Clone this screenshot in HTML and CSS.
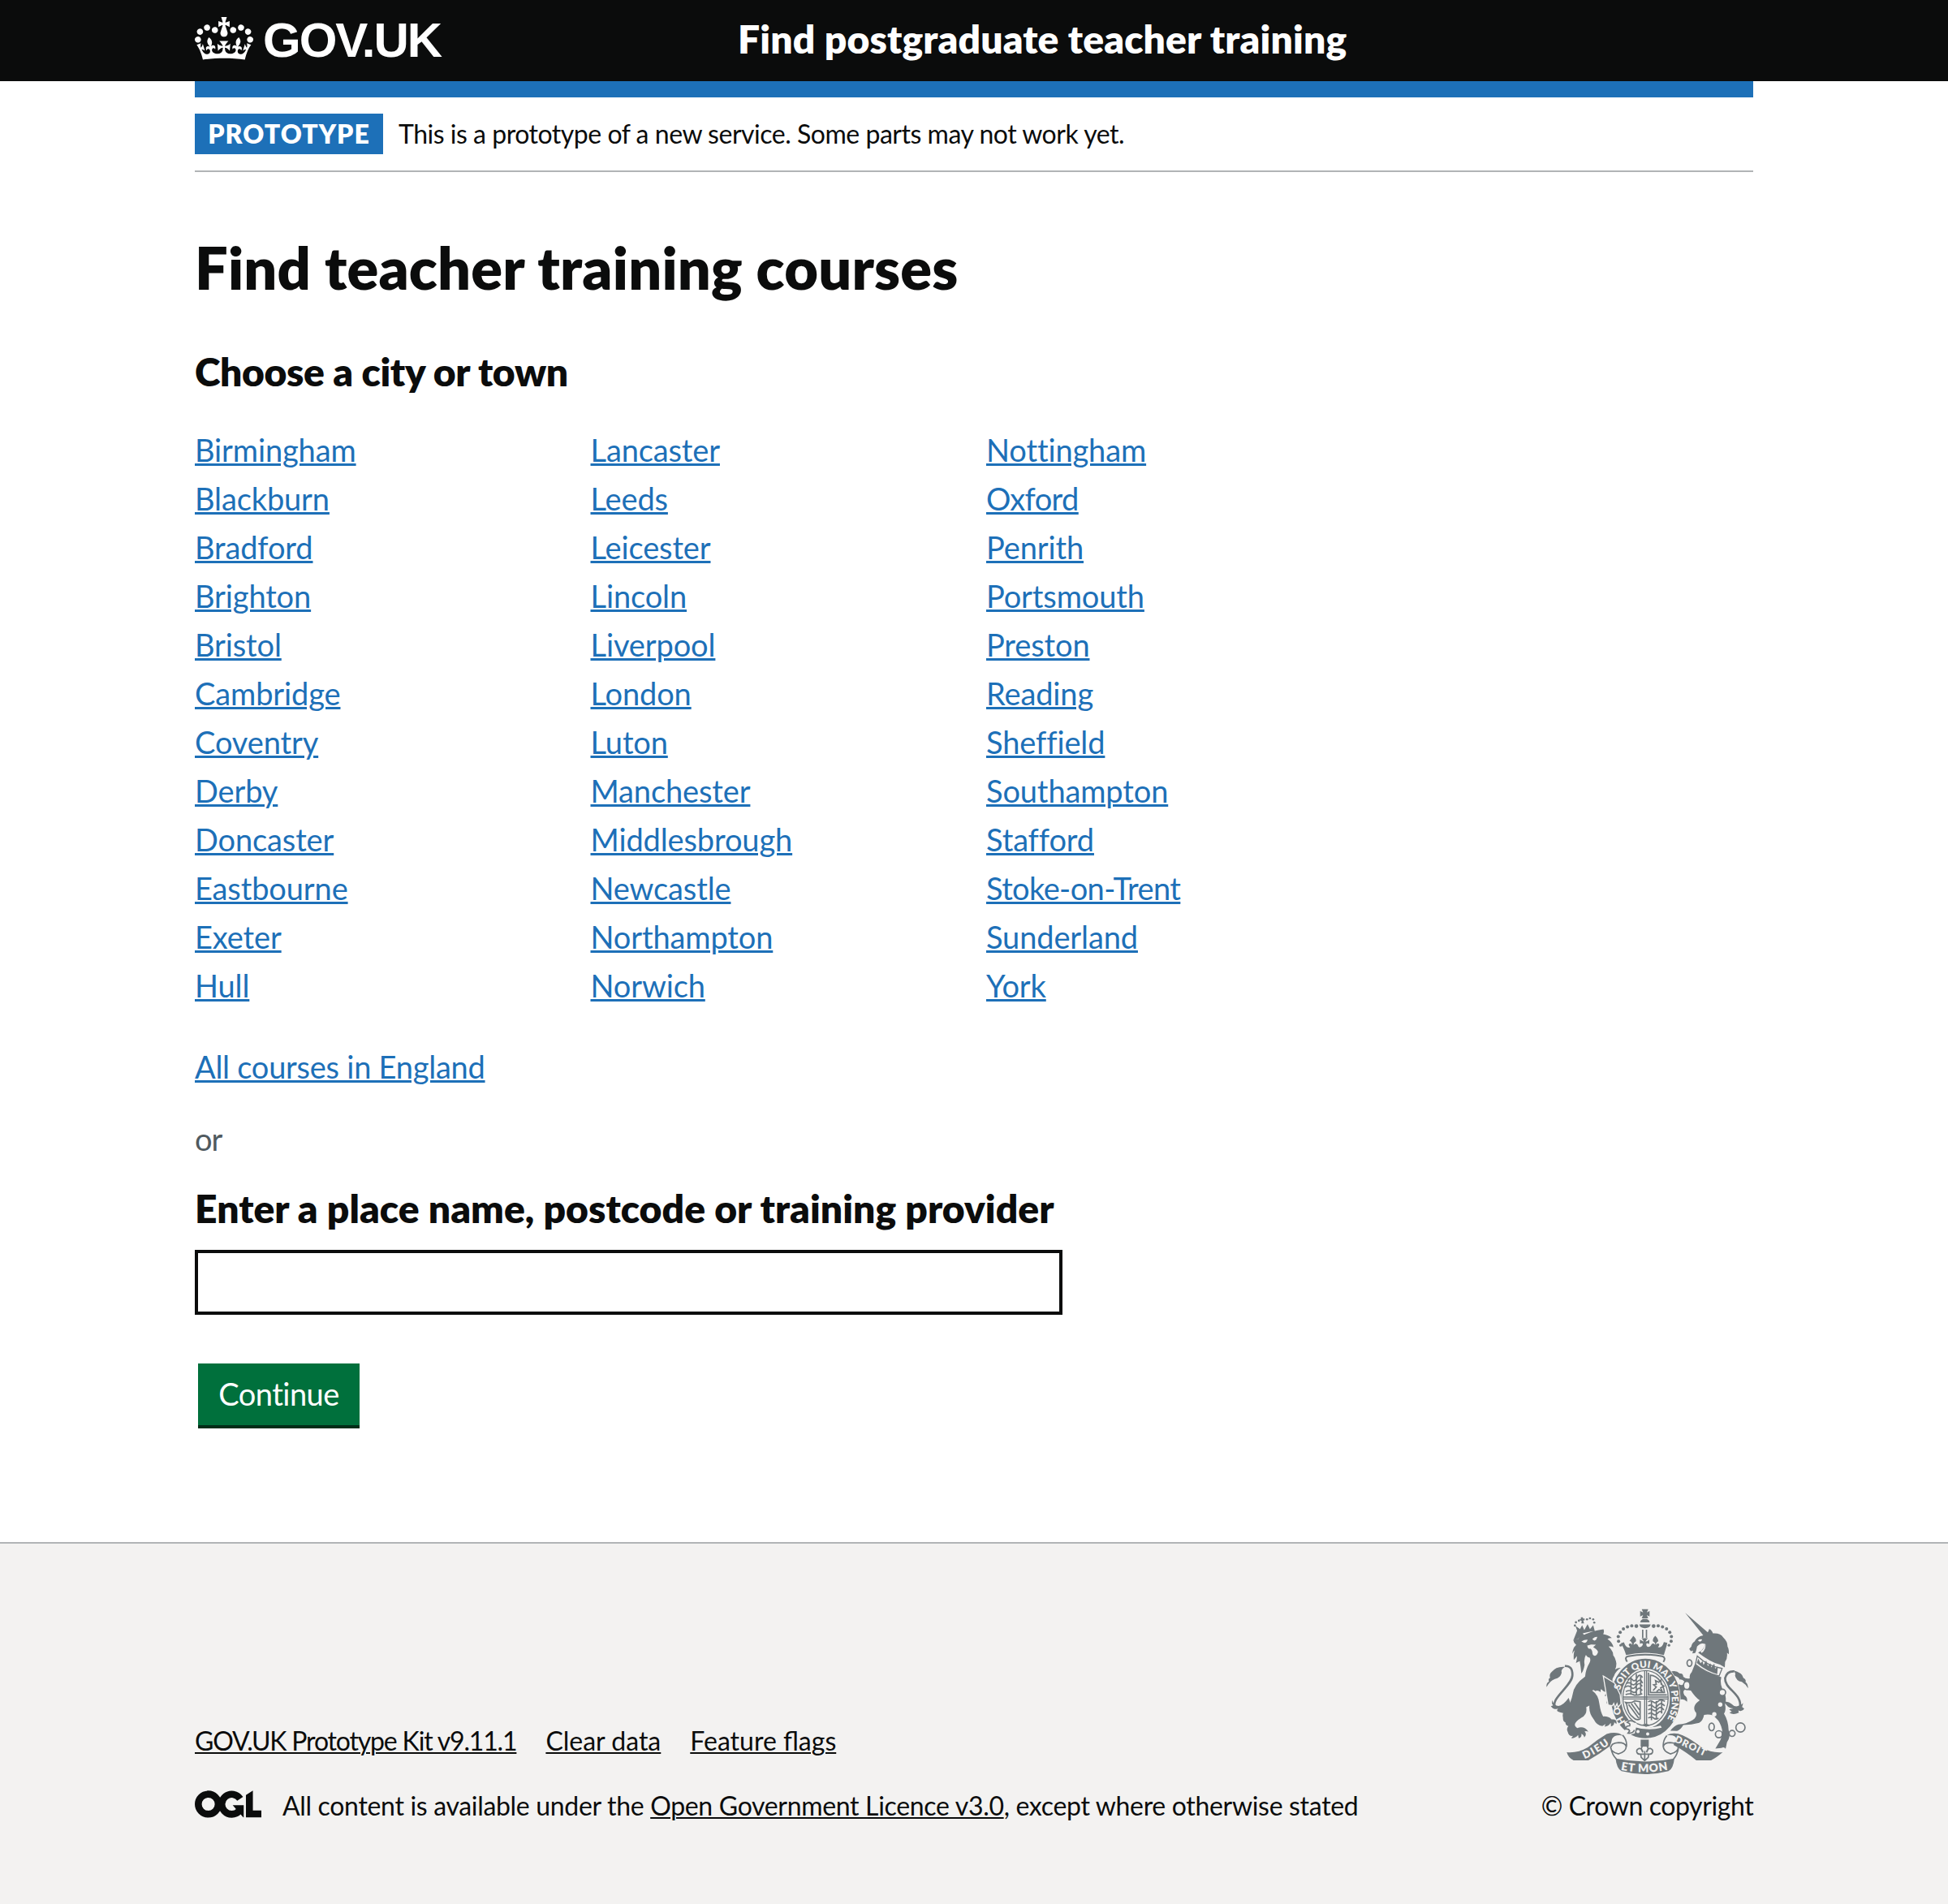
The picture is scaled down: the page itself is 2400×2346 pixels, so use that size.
FILE: index.html
```html
<!DOCTYPE html>
<html lang="en">
<head>
<meta charset="utf-8">
<title>Find teacher training courses</title>
<link rel="stylesheet" href="styles.css">
</head>
<body>
<header class="header">
  <div class="container header-row">
    <div class="header-logo">
      <svg class="crown" viewBox="0 0 132 97" aria-hidden="true"><path fill="currentColor" d="M25 30.2c3.5 1.5 7.7-.2 9.1-3.7 1.5-3.6-.2-7.8-3.9-9.2-3.6-1.4-7.6.3-9.1 3.9-1.4 3.5.3 7.5 3.9 9zM9 39.5c3.6 1.5 7.8-.2 9.2-3.7 1.5-3.6-.2-7.8-3.9-9.1-3.6-1.5-7.6.2-9.1 3.8-1.4 3.5.3 7.5 3.8 9zM4.4 57.2c3.5 1.5 7.7-.2 9.1-3.8 1.5-3.6-.2-7.7-3.9-9.1-3.5-1.5-7.6.3-9.1 3.8-1.4 3.5.3 7.6 3.9 9.1zm38.3-21.4c3.5 1.5 7.7-.2 9.1-3.8 1.5-3.6-.2-7.7-3.9-9.1-3.6-1.5-7.6.3-9.1 3.8-1.3 3.6.4 7.7 3.9 9.1zm64.4-5.6c-3.6 1.5-7.8-.2-9.1-3.7-1.5-3.6.2-7.8 3.8-9.2 3.6-1.4 7.7.3 9.2 3.9 1.3 3.5-.4 7.5-3.9 9zm15.9 9.3c-3.6 1.5-7.7-.2-9.1-3.7-1.5-3.6.2-7.8 3.7-9.1 3.6-1.5 7.7.2 9.2 3.8 1.5 3.5-.3 7.5-3.8 9zm4.7 17.7c-3.6 1.5-7.8-.2-9.2-3.8-1.5-3.6.2-7.7 3.9-9.1 3.6-1.5 7.7.3 9.2 3.8 1.3 3.5-.4 7.6-3.9 9.1zM89.3 35.8c-3.6 1.5-7.8-.2-9.2-3.8-1.4-3.6.2-7.7 3.9-9.1 3.6-1.5 7.7.3 9.2 3.8 1.4 3.6-.3 7.7-3.9 9.1zM69.7 17.7l8.9 4.7V9.3l-8.9 2.8c-.2-.3-.5-.6-.9-.9L72.4 0H59.6l3.5 11.2c-.3.3-.6.5-.9.9l-8.8-2.8v13.1l8.8-4.7c.3.3.6.7.9.9l-5 15.4v.1c-.2.8-.4 1.6-.4 2.4 0 4.1 3.1 7.5 7 8.1h.2c.3 0 .7.1 1 .1.4 0 .7 0 1-.1h.2c4-.6 7.1-4.1 7.1-8.1 0-.8-.1-1.7-.4-2.4V34l-5.1-15.4c.4-.2.7-.6 1-.9zM66 92.8c16.9 0 32.8 1.1 47.1 3.2 4-16.9 8.9-26.7 14-33.5l-9.6-3.4c1 4.9 1.1 7.2 0 10.2-1.5-1.4-3-4.3-4.2-8.7L108.6 76c2.8-2 5-3.2 7.5-3.3-4.4 9.4-10 11.9-13.6 11.2-4.3-.8-6.3-4.6-5.6-7.9 1-4.7 5.7-5.9 8-.5 4.3-8.7-3-11.4-7.6-8.8 7.1-7.2 7.9-13.5 2.1-21.1-8 6.1-8.1 12.3-4.5 20.8-4.7-5.4-12.1-2.5-9.5 6.2 3.4-5.2 7.9-2 7.2 3.1-.6 4.3-6.4 7.8-13.5 7.2-10.3-.9-10.9-8-11.2-13.8 2.5-.5 7.1 1.8 11 7.3L80.2 60c-4.1 4.4-8 5.3-12.3 5.4 1.4-4.4 8-11.6 8-11.6H55.5s6.4 7.2 7.9 11.6c-4.2-.1-8-1-12.3-5.4l1.4 16.4c3.9-5.5 8.5-7.7 10.9-7.3-.3 5.8-.9 12.8-11.1 13.8-7.2.6-12.9-2.9-13.5-7.2-.7-5 3.8-8.3 7.1-3.1 2.7-8.7-4.6-11.6-9.4-6.2 3.7-8.5 3.6-14.7-4.6-20.8-5.8 7.6-5 13.9 2.2 21.1-4.7-2.6-11.9.1-7.7 8.8 2.3-5.5 7.1-4.2 8.1.5.7 3.3-1.3 7.1-5.7 7.9-3.5.7-9-1.8-13.5-11.2 2.5.1 4.7 1.3 7.5 3.3l-4.7-15.4c-1.2 4.4-2.7 7.2-4.3 8.7-1.1-3-.9-5.3 0-10.2l-9.5 3.4c5 6.9 9.9 16.7 14 33.5 14.8-2.1 30.8-3.2 47.7-3.2z"/></svg>
      <span class="logotype">GOV.UK</span>
    </div>
    <div class="service-name">Find postgraduate teacher training</div>
  </div>
</header>

<div class="container">
  <div class="blue-bar"></div>
  <div class="phase-banner">
    <strong class="tag">PROTOTYPE</strong>
    <span class="phase-text">This is a prototype of a new service. Some parts may not work yet.</span>
  </div>
  <main class="main">
    <h1 class="heading-xl">Find teacher training courses</h1>
    <h2 class="heading-l">Choose a city or town</h2>
    <div class="cities">
      <ul class="city-list">
        <li><a class="link" href="#">Birmingham</a></li>
        <li><a class="link" href="#">Blackburn</a></li>
        <li><a class="link" href="#">Bradford</a></li>
        <li><a class="link" href="#">Brighton</a></li>
        <li><a class="link" href="#">Bristol</a></li>
        <li><a class="link" href="#">Cambridge</a></li>
        <li><a class="link" href="#">Coventry</a></li>
        <li><a class="link" href="#">Derby</a></li>
        <li><a class="link" href="#">Doncaster</a></li>
        <li><a class="link" href="#">Eastbourne</a></li>
        <li><a class="link" href="#">Exeter</a></li>
        <li><a class="link" href="#">Hull</a></li>
      </ul>
      <ul class="city-list">
        <li><a class="link" href="#">Lancaster</a></li>
        <li><a class="link" href="#">Leeds</a></li>
        <li><a class="link" href="#">Leicester</a></li>
        <li><a class="link" href="#">Lincoln</a></li>
        <li><a class="link" href="#">Liverpool</a></li>
        <li><a class="link" href="#">London</a></li>
        <li><a class="link" href="#">Luton</a></li>
        <li><a class="link" href="#">Manchester</a></li>
        <li><a class="link" href="#">Middlesbrough</a></li>
        <li><a class="link" href="#">Newcastle</a></li>
        <li><a class="link" href="#">Northampton</a></li>
        <li><a class="link" href="#">Norwich</a></li>
      </ul>
      <ul class="city-list">
        <li><a class="link" href="#">Nottingham</a></li>
        <li><a class="link tight" href="#">Oxford</a></li>
        <li><a class="link" href="#">Penrith</a></li>
        <li><a class="link" href="#">Portsmouth</a></li>
        <li><a class="link" href="#">Preston</a></li>
        <li><a class="link" href="#">Reading</a></li>
        <li><a class="link" href="#">Sheffield</a></li>
        <li><a class="link" href="#">Southampton</a></li>
        <li><a class="link" href="#">Stafford</a></li>
        <li><a class="link tight" href="#">Stoke-on-Trent</a></li>
        <li><a class="link" href="#">Sunderland</a></li>
        <li><a class="link" href="#">York</a></li>
      </ul>
    </div>
    <p class="all-courses"><a class="link" href="#">All courses in England</a></p>
    <p class="or">or</p>
    <form class="search">
      <label class="label" for="place">Enter a place name, postcode or training provider</label>
      <input class="input" id="place" type="text">
      <button class="button" type="button">Continue</button>
    </form>
  </main>
</div>

<footer class="footer">
  <div class="container footer-row">
    <div class="footer-meta">
      <div class="footer-links">
        <a class="footer-link kit" href="#">GOV.UK Prototype Kit v9.11.1</a>
        <a class="footer-link" href="#">Clear data</a>
        <a class="footer-link" href="#">Feature flags</a>
      </div>
      <div class="licence">
        <svg class="ogl" viewBox="0 0 483 196" aria-hidden="true">
          <g fill="none" stroke="currentColor" stroke-width="50.5">
            <circle cx="97.8" cy="97.8" r="72.5"/>
            <path d="M329 59A72.5 72.5 0 1 0 322 147"/>
          </g>
          <path fill="currentColor" d="M275 106h80v88h-3l-20-23-33-38zM371 32L421.500 0v143h62v51H371z"/>
        </svg>
        <span class="licence-text">All content is available under the <a class="footer-link" href="#">Open Government Licence v3.0</a>, except where otherwise stated</span>
      </div>
    </div>
    <div class="copyright">
      <svg class="crest" viewBox="40 34 756 614" aria-hidden="true">
        <defs>
          <path id="garter" d="M350 469A96 115 0 0 1 313 367A97 114 0 0 1 507 367A97 114 0 0 1 455 480"/>
          <path id="dieu" d="M184 592Q232 572 284 531"/>
          <path id="etmon" d="M314 631Q404 650 496 631"/>
          <path id="droit" d="M515 527Q575 556 642 588"/>
        </defs>
        <!-- royal crown -->
        <g class="ink">
          <path d="M396 36h24l-5 12 10-5v20l-10-5 5 12h-24l5-12-11 5V43l11 5zM400 72h14q10 3 11 13h-35q1-9 10-13zM387 93h42q-3 14-21 14t-21-14zM397 112h5v30h-5zM411 112h5v30h-5z"/>
          <g>
            <circle cx="376" cy="99" r="7"/><circle cx="359" cy="98" r="6"/><circle cx="343" cy="102" r="6"/><circle cx="328" cy="109" r="6"/><circle cx="316" cy="122" r="6"/><circle cx="309" cy="138" r="6"/><circle cx="310" cy="155" r="6"/><circle cx="318" cy="170" r="5"/>
            <circle cx="440" cy="99" r="7"/><circle cx="457" cy="98" r="6"/><circle cx="473" cy="102" r="6"/><circle cx="488" cy="109" r="6"/><circle cx="500" cy="122" r="6"/><circle cx="506" cy="138" r="6"/><circle cx="505" cy="155" r="6"/><circle cx="497" cy="170" r="5"/>
          </g>
          <path d="M338 206Q329 178 318 163l12-4q8 25 23 18-8-6-4-12 7-4 12 4-2-13-10-15 13-17 13-19 14 12 10 21-9 4-8 13 8-10 15 0 3 13 14 6 6-5 5-11-6-3-11 1v-16q8 4 14 8-2-7-8-13h24q-6 6-9 13 8-2 14-8v17q-7-5-11-2-1 11 7 12 9 0 12-9 7-8 14 2 0-10-8-13-4-10 8-21 12 12 11 20-8 4-9 13 7-8 12-3 3 6-4 11 15 7 22-18l13 3Q486 180 478 206 408 190 338 206z"/>
        </g>
        <path class="line" stroke-width="6" d="M342 231Q330 214 346 211 408 198 472 211 487 216 476 232"/>
        <!-- lion -->
        <g class="ink">
          <path d="M162 132l-12-34 17 12 8-14 8 18 12-22 9 18 12-14 6 22Q194 118 162 132z"/>
          <circle cx="148" cy="97" r="4"/><circle cx="152" cy="85" r="4"/><circle cx="163" cy="79" r="4"/><path d="M170 66h8v5h6v7h-5l3 11h-10l1-10-7-1v-6h5z"/><circle cx="193" cy="74" r="4"/><circle cx="204" cy="70" r="4"/><circle cx="216" cy="74" r="4"/><circle cx="220" cy="86" r="4"/>
          <path d="M143 150l17-3q3-8 10-9 40-22 84-27 4 8-1 18 20 3 32 14-12 0-16 4 20 14 22 31-10-6-18-3 18 17 17 32 9 11 12 31 0 13-5 22 11-7 21-6-18 12-24 28-7 10-7 18 20 24 25 50 3 20-1 33l-7 2-2-10-5 16-8-2-2-12-6 15-8-4-2-10-6 10q1-15 7-22-3-10-14-8l8-14q-14-2-20-11-4 3-2 11-13-10-19-4l-8-4-5 2q24 16 27 50 5 33 14 46 21-1 31 11 22-3 18 17l-8-7q0 13-12 16l-1-13q-9 14-23 14l4-10-12 8q-21-3-31-24-20-24-17-52l-12 6q5 26-17 38-24 15-25 26 0 9 9 13 26-9 41 14-9-4-14-1 10 10-1 22-2-11-11-14 3 14-10 17l-2-12q-12 14-25 11l6-8q-16 2-19-14-7-12 2-22-11-3-11-14-10-3-9-18-4-18 6-24-2-12 9-13 15-18 21-50 5-36 46-65 2-26 16-50 6-12 1-20-8 0-13-8-4-15-1-25l-13 17q-2-23 4-35l-13 12q-2-26 14-46-6-8-8-14-8 0-14-8z"/>
          <path d="M142 150l20-4 2-11 88-20-6 14-58 22 2 52q-10 16-6 40-4 22-12 32-2-25-6-46l-14 7q4-14 4-26l-12 14q-2-26 4-36-6 4-9 14 0-22 14-33-9-6-11-19z"/>
          <path d="M43 325q-2-15 9-20-4-12 4-14-4-14 6-22 17-22 49-19-16 10-12 22-4 19-25 23-19 7-31 30z"/>
          <path d="M134 392q-8 22-27 25l5 6q-24-4-30-10 0-6 4-9-16 8-27-8 5-1 8-3-6-7-4-20 8 22 24 22 16 0 38-30z"/>
        </g>
        <path class="line" stroke-width="8" d="M77 404C50 370 139 322 139 280Q139 245 111 247"/>
        <path class="paper" d="M172 156q10-7 23-7-2 12-12 12-5-1-11-5zM213 146q11-8 18-7-3 12-10 14-6-2-8-7zM192 172l16-5 18 1-10 9q14 8 18 17-3 14-12 15-9-2-9-12 0-9-8-15-8 5-11-10z"/>
        <!-- unicorn -->
        <g class="ink">
          <path d="M557 50l87 75-20 8zM572 184l8-9q1-12 12-19 8-18 32-23 18-5 22-23 9 2 14 16 28-2 38 15 17 16 16 34 6 9 5 28l-7-5q3 20-7 34l-1 20-18-10q-38-11-81-45 21-8 27-31-17-8-31 9-2 14-7 24l-10 1 2-10-8 2z"/>
          <path d="M593 240q30 28 98 48-8 25 12 60 9 22 2 42 5 20-4 34 16 26 17 60 10 22-6 46l-5 24q-5-9-16-3l-22 2 13-22q14-20 12-48-7-30-23-43-12-17-44-12-4 22-18 30-28 8-59 8-10 18-23 22l-25-1q14-18 30-23 29-2 53-17 16-9 13-26-20-24 13-47-15-9-33-36l-22-3q-10 5-2 20 13 8 10 24-12-12-24-8-16-10-21-30-12-14-16-26 20 3 31 0 17 9 20-10-6-9-17-8-10-17-33-13l-2-15q20-8 35 6 12-3 13 12 10 9 24 6-2-15 7-23z"/>
          <path d="M790 330q0-18-9-23 3-11-8-16-4-19-38-28 11 11 7 19 4 20 25 24 14 8 23 24zM703 380q10 24 33 24l-16 4 10 8-9 4q14 10 35 0l-2-8q16 6 22-7l-8-6 4-14q-26 22-44 2-10-10-25-7z"/>
        </g>
        <path class="line" stroke-width="8" d="M760 400C770 350 702 332 705 292Q712 265 739 267"/>
        <path class="paper" stroke="#6f777b" stroke-width="4" d="M602 210q40 38 92 46l-11 28q-48-10-88-43z"/>
        <path class="ink" d="M600 236l6-16 8 17 7-9 4 15 10-16 6 20 10-10 3 15 11-14 3 19 10-8-2 28q-39-10-76-41z"/>
        <path class="paper" d="M604 152q7-6 16-4-2 8-9 9zM632 165q4 20-14 34l-4-6q14-9 18-28z"/>
        <g class="paper"><circle cx="687" cy="390" r="8"/><circle cx="665" cy="426" r="8"/><ellipse cx="552" cy="263" rx="7" ry="9"/></g>
        <g class="line" stroke-width="5"><ellipse cx="573" cy="236" rx="9" ry="12"/><ellipse cx="563" cy="319" rx="12" ry="15" class="bead"/><circle cx="695" cy="345" r="12" class="bead"/><ellipse cx="655" cy="473" rx="10" ry="14"/><circle cx="682" cy="500" r="13"/><circle cx="731" cy="497" r="11"/><circle cx="762" cy="475" r="17"/></g>
        <!-- garter and shield -->
        <ellipse class="paper" cx="410" cy="367" rx="130" ry="149"/>
        <ellipse class="line" cx="410" cy="367" rx="109" ry="129" stroke-width="37"/>
        <ellipse class="line" cx="410" cy="366" rx="84" ry="102" stroke-width="4"/>
        <path class="line" stroke-width="4" d="M407 264v200M414 264v200M327 362h166M327 369h166"/>
        <g class="line" stroke-width="5">
          <path d="M344 298q10-10 18 0t17-8 20 0M339 311q12-5 20 3t20-8 20 5M334 326q12-10 22 0t20-6 22 2M337 342q15-8 24 0t17-6 20 2M336 353q18-6 28 0t34-3M356 286v68M376 276v80M392 284v68"/>
          <path d="M421 272v82h68M428 281q20 0 36 22 14 20 16 42h-52zM438 338l12-13-10-8 10-2-3-14 12 6 8-8 1 15 10 8-12 6 6 14-12-8-9 8"/>
          <path d="M420 380q10-8 18 0t18-2 26 0M420 395q10-8 18 2t18-4 25 2M420 410q10-8 18 0t18-4 22 4M420 425q10-8 18 0t18-4 15 2M420 440q12-8 20 0t18 0M432 376v72M450 376v66M470 376v46"/>
          <path d="M336 382q22 5 34-6l20 3v64q-12 8-24-4-22-14-26-50zM347 389l38 52M357 386l30 42M368 382l20 28"/>
        </g>
        <path class="ink" d="M395 465l16-4 18 5-17 7z"/>
        <path class="ink paw" d="M256 288l38 24 20 42 3 32-8 10-4-15-8 16-4-16-7 11-13-2z"/>
        <path class="paper" d="M330 455l24-10 24 16-8 36-28 8-14-12 10-15z"/>
        <path class="line" stroke-width="5" d="M372 456q-20-12-30 0 14 4 9 13-15-1-14 12 11-2 14 7l-6 8q18 2 24-12"/>
        <path class="paper" d="M372 465q42 18 94 3l4 8q-50 13-99-2z"/>
        <circle class="paper" cx="382" cy="490" r="6"/><circle class="paper" cx="418" cy="499" r="6"/>
        <text class="motto" font-size="35" dx="0 6 0 52"><textPath href="#garter" startOffset="20">HO SOIT QUI MAL Y PENSE</textPath></text>
        <!-- ribbon -->
        <path class="ink" d="M118 567q40 4 78-18 36-30 70-50 38-11 60 6-30-5-40 12-3 16-8 27-40 30-80 53h-55q-20-10-25-30zM696 567q-40 4-78-18-36-30-70-45-34-14-60 0 36-3 36 14-8 18-10 22 50 28 84 57h55q20-10 43-30zM299 590q108 22 218 0-4 38-22 47-88 22-174 0-18-10-22-47z"/>
        <path class="line" stroke-width="5" d="M280 545q0 22 30 28 30-10 28-28-4-14-28-14-28 2-28 18M325 503q18 20 14 44M282 552q4 24 20 40M532 545q0 22-30 28-26-10-26-28 4-14 26-14 30 2 30 18M489 505q-16 20-13 44M532 552q-4 24-18 40"/>
        <path class="ink" d="M392 520h30v26h-30z"/>
        <path class="line" stroke-width="5" d="M407 533q-14 13-12 24l5 10q-2-16-15-14-10 4-7 14 3 8 14 7l2 12 13 12 13-12 2-12q11 1 14-7 3-10-7-14-13-2-15 14l5-10q2-11-12-24zM394 574h26M407 562v36"/>
        <text class="motto" font-size="38"><textPath href="#dieu" textLength="108">DIEU</textPath></text>
        <text class="motto" font-size="42"><textPath href="#etmon" startOffset="4" textLength="176">ET MON</textPath></text>
        <text class="motto" font-size="36"><textPath href="#droit" textLength="126">DROIT</textPath></text>
      </svg>
      <span class="copyright-text">© Crown copyright</span>
    </div>
  </div>
</footer>
</body>
</html>
```
FILE: styles.css
```css
* {
  box-sizing: border-box;
}

body {
  margin: 0;
  background: #fff;
  color: #0b0c0c;
  font-family: Lato, "Noto Sans", sans-serif;
  font-size: 38px;
  line-height: 50px;
}

h1, h2, p, ul {
  margin: 0;
  padding: 0;
}

.container {
  width: 1920px;
  margin: 0 auto;
}

/* Header */
.header {
  height: 100px;
  background: #0b0c0c;
  color: #fff;
}

.header-row {
  display: flex;
  align-items: flex-start;
}

.header-logo {
  display: flex;
  width: 669px;
  gap: 12px;
}

.crown {
  width: 72px;
  height: 53px;
  margin-top: 21px;
}

.logotype {
  padding-top: 20px;
  font-family: "Liberation Sans", Arial, sans-serif;
  font-size: 60px;
  font-weight: 700;
  line-height: 60px;
  letter-spacing: -2px;
}

.service-name {
  padding-top: 18px;
  font-size: 48px;
  font-weight: 800;
  line-height: 60px;
  letter-spacing: 0.13px;
}

.blue-bar {
  height: 20px;
  background: #1d70b8;
}

/* Phase banner */
.phase-banner {
  display: flex;
  align-items: center;
  gap: 19px;
  height: 92px;
  border-bottom: 2px solid #b1b4b6;
  font-size: 32px;
}

.tag {
  width: 232px;
  height: 50px;
  background: #1d70b8;
  color: #fff;
  font-weight: 800;
  letter-spacing: 1px;
  text-align: center;
}

.phase-text {
  letter-spacing: -0.48px;
}

/* Main content */
.main {
  padding: 77px 0 140px;
}

.heading-xl {
  margin-bottom: 59px;
  font-size: 72px;
  font-weight: 800;
  line-height: 80px;
  letter-spacing: 0.18px;
}

.heading-l {
  margin-bottom: 41px;
  font-size: 48px;
  font-weight: 800;
  line-height: 60px;
  letter-spacing: -0.38px;
}

.cities {
  display: flex;
  margin-bottom: 50px;
}

.city-list {
  display: flex;
  flex-direction: column;
  gap: 10px;
  width: 487.5px;
  list-style: none;
}

.link {
  color: #1d70b8;
  letter-spacing: -0.12px;
  text-decoration-thickness: 2.5px;
  text-underline-offset: 2px;
}

.link.tight {
  letter-spacing: -0.6px;
}

.all-courses {
  margin-bottom: 39px;
}

.all-courses .link {
  letter-spacing: -0.25px;
}

.or {
  margin-bottom: 31px;
  color: #505a5f;
  letter-spacing: -1px;
}

.search {
  display: flex;
  flex-direction: column;
  align-items: flex-start;
}

.label {
  margin-bottom: 21px;
  font-size: 48px;
  font-weight: 800;
  line-height: 60px;
  letter-spacing: 0.03px;
}

.input {
  width: 1069px;
  height: 80px;
  margin-bottom: 60px;
  border: 4px solid #0b0c0c;
  border-radius: 0;
}

.button {
  width: 199px;
  height: 80px;
  margin-left: 4px;
  padding: 2px 0 4px;
  border: 0;
  border-bottom: 4px solid #002d18;
  background: #00703c;
  color: #fff;
  font: inherit;
  letter-spacing: -0.5px;
}

/* Footer */
.footer {
  height: 446px;
  padding-top: 80px;
  border-top: 2px solid #b1b4b6;
  background: #f3f2f1;
  font-size: 32px;
  line-height: 40px;
}

.footer-row {
  display: flex;
  align-items: flex-end;
  justify-content: space-between;
}

.footer-links {
  display: flex;
  gap: 36px;
  margin-bottom: 40px;
}

.footer-link {
  color: inherit;
  text-decoration-thickness: 2px;
  text-underline-offset: 2px;
}

.footer-link.kit {
  letter-spacing: -1.17px;
}

.licence {
  display: flex;
  gap: 26px;
}

.ogl {
  width: 82px;
  height: 34px;
  margin-top: 1px;
}

.licence-text {
  letter-spacing: -0.32px;
}

.copyright {
  display: flex;
  flex-direction: column;
  align-items: center;
  gap: 19px;
  width: 261px;
  white-space: nowrap;
  letter-spacing: -0.4px;
}

.crest {
  width: 252px;
  height: 204px;
}

.ink {
  fill: #6f777b;
}

.line {
  fill: none;
  stroke: #6f777b;
}

.paper,
.bead {
  fill: #f3f2f1;
}

.paw {
  stroke: #f3f2f1;
  stroke-width: 8px;
  paint-order: stroke;
}

.motto {
  fill: #f3f2f1;
  font-family: Lato, sans-serif;
  font-weight: 800;
  letter-spacing: 0;
}
```
